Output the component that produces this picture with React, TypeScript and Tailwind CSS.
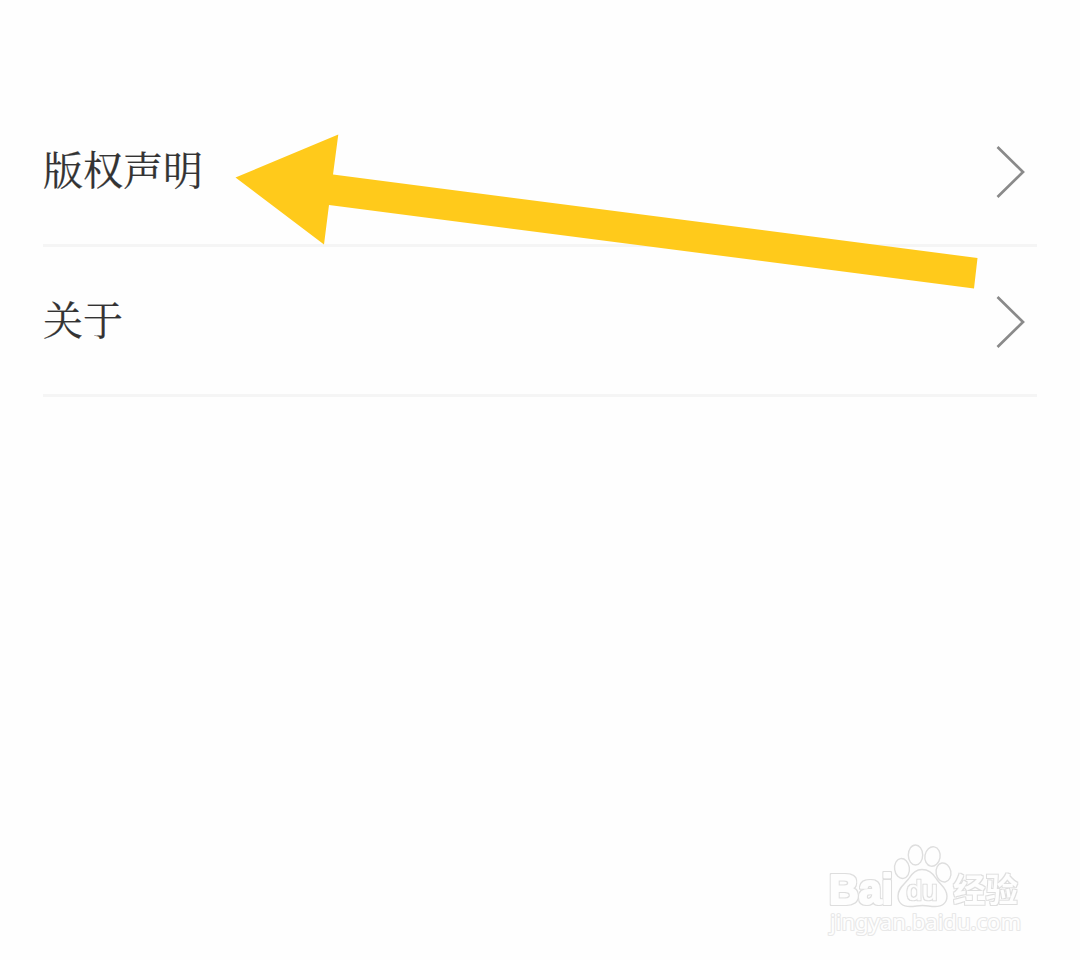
const items = ['版权声明', '关于']

function Chevron() {
  return (
    <svg width="32" height="56" viewBox="0 0 32 56" fill="none" className="mt-0.5 mr-2.5">
      <path d="M2.5 3 L28 28 L2.5 53" stroke="#8a8a8a" strokeWidth="2.7" />
    </svg>
  )
}

function Row({ label }: { label: string }) {
  return (
    <li className="flex h-[150px] items-center justify-between border-b-3 border-[#f5f5f5]">
      <span className="pb-1.5 text-[40px] leading-none text-[#333333] [-webkit-text-stroke:0.2px_#333333]">
        {label}
      </span>
      <Chevron />
    </li>
  )
}

function Arrow() {
  return (
    <svg
      className="pointer-events-none absolute top-0 left-0"
      width="1080"
      height="400"
      viewBox="0 0 1080 400"
    >
      <path
        d="M235.5 177.5 L338.3 134.5 L333 174.5 L977.5 258 L974 288.5 L329 205 L324 244.5 Z"
        fill="#ffca1b"
      />
    </svg>
  )
}

function Watermark() {
  return (
    <svg
      className="pointer-events-none absolute top-[835px] left-[820px]"
      width="210"
      height="110"
      viewBox="0 0 210 110"
      fill="#fefefe"
      strokeLinejoin="round"
    >
      <defs>
        {/* thin grey rim around merged white shapes */}
        <filter id="rim" x="-10%" y="-20%" width="120%" height="140%">
          <feMorphology in="SourceAlpha" operator="dilate" radius="0.8" result="fat" />
          <feGaussianBlur in="fat" stdDeviation="0.35" result="soft" />
          <feFlood floodColor="#dedede" />
          <feComposite in2="soft" operator="in" result="edge" />
          <feMerge>
            <feMergeNode in="edge" />
            <feMergeNode in="SourceGraphic" />
          </feMerge>
        </filter>
      </defs>

      <text
        x="9"
        y="69"
        fontSize="42"
        textLength="64"
        lengthAdjust="spacingAndGlyphs"
        fontFamily='"Liberation Sans", Arial, sans-serif'
        fontWeight="700"
        stroke="#fefefe"
        strokeWidth="2"
        filter="url(#rim)"
      >
        Bai
      </text>

      {/* Paw */}
      <g stroke="#dedede" strokeWidth="1.4">
        <ellipse cx="82" cy="33.5" rx="7.4" ry="10" transform="rotate(-8 82 33.5)" />
        <ellipse cx="95.5" cy="20" rx="7.2" ry="10" />
        <ellipse cx="112.5" cy="21.5" rx="7.6" ry="9.8" transform="rotate(10 112.5 21.5)" />
        <ellipse cx="123.5" cy="37.5" rx="7.4" ry="9.6" transform="rotate(-10 123.5 37.5)" />
        <path d="M102 34.5 C95 34.5 91.5 39 88.5 44 C84.5 49 78 53 78 61 C78 68 83 71.5 90 71.5 C95 71.5 98 70.5 102.5 70.5 C107 70.5 110 71.5 115 71.5 C122 71.5 127 68 127 61 C127 53 120 49.5 116.5 44 C113.5 39 109 34.5 102 34.5 Z" />
      </g>

      <text
        x="86.5"
        y="65"
        fontSize="27"
        textLength="31"
        lengthAdjust="spacingAndGlyphs"
        fontFamily='"Liberation Sans", Arial, sans-serif'
        stroke="#fefefe"
        strokeWidth="0.4"
        filter="url(#rim)"
      >
        du
      </text>
      <text
        x="133"
        y="67"
        fontSize="33"
        textLength="65"
        lengthAdjust="spacingAndGlyphs"
        fontFamily='"Noto Sans CJK SC", sans-serif'
        fontWeight="700"
        filter="url(#rim)"
      >
        经验
      </text>
      <text
        x="10"
        y="95"
        fontSize="22"
        textLength="191"
        lengthAdjust="spacingAndGlyphs"
        fontFamily='"Noto Sans", sans-serif'
        stroke="#e8e8e8"
        strokeWidth="2.2"
        paintOrder="stroke"
      >
        jingyan.baidu.com
      </text>
    </svg>
  )
}

export default function App() {
  return (
    <main className="relative h-[960px] w-[1080px] overflow-hidden bg-[#fefefe] px-[43px] pt-[97px] font-['Noto_Serif_CJK_SC','Noto_Serif_SC','Noto_Sans_CJK_SC',serif]">
      <ul>
        {items.map((label) => (
          <Row key={label} label={label} />
        ))}
      </ul>
      <Arrow />
      <Watermark />
    </main>
  )
}
